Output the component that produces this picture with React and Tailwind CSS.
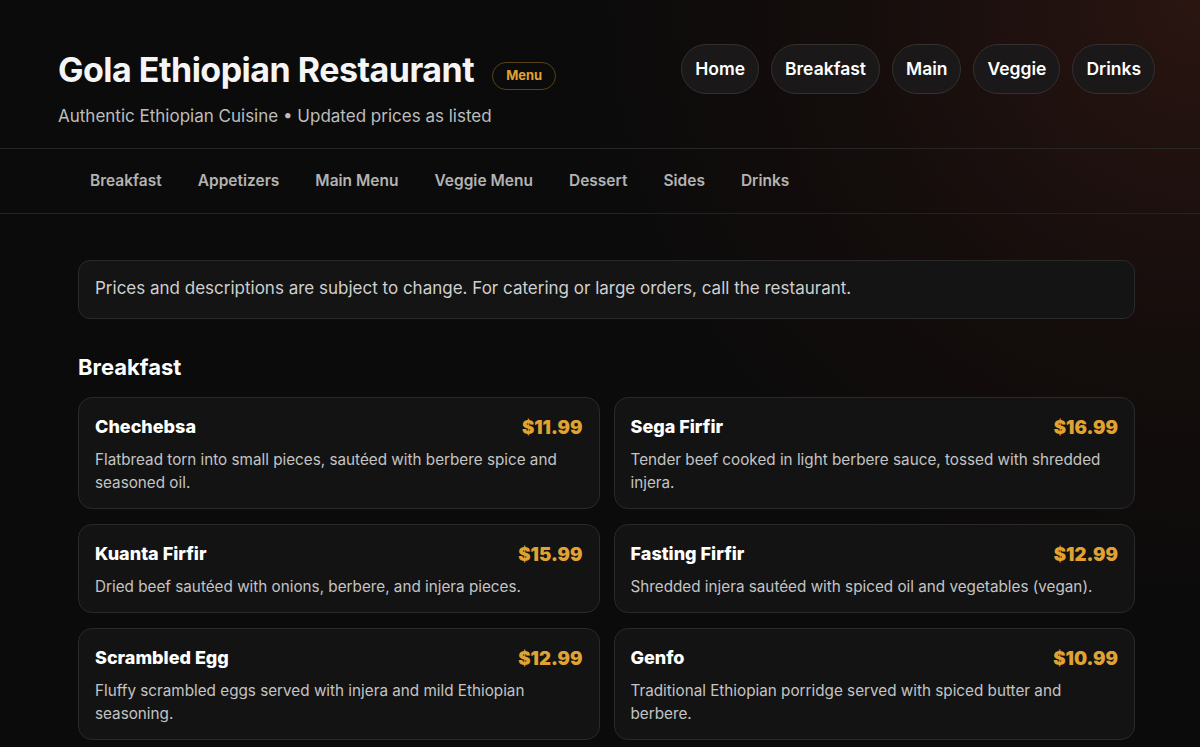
import React from "react";

const pills = ["Home", "Breakfast", "Main", "Veggie", "Drinks"];
const tabs = ["Breakfast", "Appetizers", "Main Menu", "Veggie Menu", "Dessert", "Sides", "Drinks"];

const breakfast = [
  { name: "Chechebsa", price: "$11.99", desc: "Flatbread torn into small pieces, sautéed with berbere spice and seasoned oil." },
  { name: "Sega Firfir", price: "$16.99", desc: "Tender beef cooked in light berbere sauce, tossed with shredded injera." },
  { name: "Kuanta Firfir", price: "$15.99", desc: "Dried beef sautéed with onions, berbere, and injera pieces." },
  { name: "Fasting Firfir", price: "$12.99", desc: "Shredded injera sautéed with spiced oil and vegetables (vegan)." },
  { name: "Scrambled Egg", price: "$12.99", desc: "Fluffy scrambled eggs served with injera and mild Ethiopian seasoning." },
  { name: "Genfo", price: "$10.99", desc: "Traditional Ethiopian porridge served with spiced butter and berbere." },
];

function MenuCard({ item }) {
  return (
    <div className="rounded-[14px] border border-[#2a2a2a] bg-[#131313] px-4 pt-[17px] pb-[14px]">
      <div className="flex items-center justify-between">
        <h3 className="text-[18px] font-extrabold leading-6 text-white">{item.name}</h3>
        <span className="text-[18.5px] font-black leading-6 text-[#e0a332]">{item.price}</span>
      </div>
      <p className="mt-[9px] text-[15.25px] leading-[23px] text-[#c4c4c4]">{item.desc}</p>
    </div>
  );
}

export default function App() {
  return (
    <div
      className="min-h-screen bg-[#0b0b0b] bg-[radial-gradient(circle_at_100%_0%,#2a1511_0%,#140d0c_25%,transparent_45%)] text-white"
      style={{ fontFamily: "Inter, 'Noto Sans', sans-serif" }}
    >
      {/* Header */}
      <header className="flex items-start justify-between border-b border-[#262626] pl-[58px] pr-[45px] pt-[44px] pb-[18px]">
        <div>
          <div className="flex h-[50px] items-center gap-[18px]">
            <h1 className="text-[34px] font-bold tracking-[-0.015em] text-[#f5f5f5]">Gola Ethiopian Restaurant</h1>
            <span className="mt-[14px] flex h-[28px] items-center rounded-full border border-[#5a4316] px-[13px] text-[13px] font-bold text-[#e0a332]">
              Menu
            </span>
          </div>
          <p className="mt-[10px] text-[17px] text-[#bdbdbd]">Authentic Ethiopian Cuisine • Updated prices as listed</p>
        </div>
        <nav className="flex gap-3">
          {pills.map((p) => (
            <a
              key={p}
              href="#"
              className="flex h-[50px] items-center rounded-full border border-[#353030] bg-[#1a1818] px-[13px] text-[17.5px] font-semibold text-white"
            >
              {p}
            </a>
          ))}
        </nav>
      </header>

      {/* Section tabs */}
      <div className="flex h-[65px] items-center gap-3 border-b border-[#222] px-[78px]">
        {tabs.map((t) => (
          <a key={t} href="#" className="px-3 text-[15.5px] font-semibold text-[#b3b3b3]">
            {t}
          </a>
        ))}
      </div>

      {/* Content */}
      <main className="pl-[78px] pr-[65px] pt-[46px]">
        <div className="flex h-[59px] items-center rounded-xl border border-[#2a2a2a] bg-[#141414] px-4 text-[17px] text-[#cfcfcf]">
          Prices and descriptions are subject to change. For catering or large orders, call the restaurant.
        </div>

        <h2 className="mt-[32px] text-[22px] font-bold text-white">Breakfast</h2>
        <div className="mt-[13px] grid grid-cols-2 gap-x-[14px] gap-y-[15px]">
          {breakfast.map((item) => (
            <MenuCard key={item.name} item={item} />
          ))}
        </div>
      </main>
    </div>
  );
}
